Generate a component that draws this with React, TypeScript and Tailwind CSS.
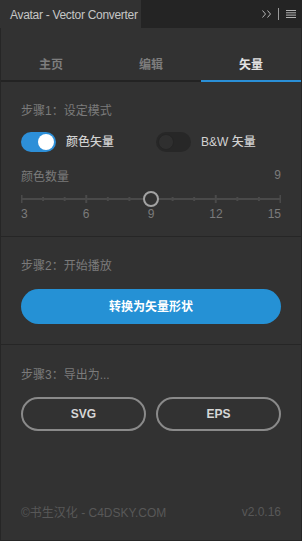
const ticks = Array.from({ length: 13 }, (_, i) => i);
const labels = [3, 6, 9, 12, 15];

function Toggle({ on }: { on: boolean }) {
  return (
    <div
      className={
        on
          ? 'w-[35px] h-[20px] rounded-full bg-[#2d8fd8] flex items-center justify-end px-[2px]'
          : 'w-[35px] h-[20px] rounded-full bg-[#272727] flex items-center justify-start px-[2px]'
      }
    >
      <div
        className={
          on
            ? 'w-[16px] h-[16px] rounded-full bg-white'
            : 'w-[16px] h-[16px] rounded-full bg-[#2f2f2f] border border-[#252525]'
        }
      />
    </div>
  );
}

function Slider() {
  // value 9 on a 3..15 scale
  const pct = ((9 - 3) / 12) * 100;
  return (
    <div className="mt-[6px]">
      <div className="relative h-[16px]">
        <svg width="260" height="16" className="block">
          <line x1="0.5" y1="8" x2="259.5" y2="8" stroke="#4a4a4a" strokeWidth="2" />
          {ticks.map((i) => {
            const x = 0.5 + (259 * i) / 12;
            const major = i % 3 === 0;
            return (
              <line
                key={i}
                x1={x}
                x2={x}
                y1={major ? 4 : 6}
                y2={major ? 12 : 10}
                stroke="#4a4a4a"
                strokeWidth="2"
              />
            );
          })}
        </svg>
        <div
          className="absolute top-0 w-[16px] h-[16px] -translate-x-1/2 rounded-full border-2 border-[#a3a3a3] bg-[#323232]"
          style={{ left: `${pct}%` }}
        />
      </div>
      <div className="relative h-[14px] text-[12px] leading-[14px] text-[#7b7b7b]">
        {labels.map((n, i) => (
          <span
            key={n}
            className={
              i === 0
                ? 'absolute left-0 top-0'
                : i === labels.length - 1
                  ? 'absolute right-0 top-0'
                  : 'absolute top-0 -translate-x-1/2'
            }
            style={i > 0 && i < labels.length - 1 ? { left: `${(i / 4) * 100}%` } : undefined}
          >
            {n}
          </span>
        ))}
      </div>
    </div>
  );
}

export default function App() {
  return (
    <div className="w-[302px] h-[541px] bg-[#242424] flex flex-col overflow-hidden font-['Liberation_Sans','Noto_Sans_CJK_SC',sans-serif]">
      {/* Header */}
      <div className="h-[28px] shrink-0 flex">
        <div className="w-[141px] bg-[#323232] flex items-center pl-[10px] pt-[1px] text-[12px] text-[#c6c6c6] whitespace-nowrap font-['Liberation_Sans',sans-serif] tracking-[-0.3px]">
          Avatar - Vector Converter
        </div>
        <div className="flex-1 flex items-center justify-end pr-[6px]">
          <svg width="10" height="8" viewBox="0 0 10 8" className="mr-[6px]">
            <path d="M0.5 0.5 L3.5 4 L0.5 7.5 M5.5 0.5 L8.5 4 L5.5 7.5" fill="none" stroke="#b4b4b4" strokeWidth="1" />
          </svg>
          <div className="w-px h-[12px] bg-[#9a9a9a] mr-[7px]" />
          <svg width="10" height="8" viewBox="0 0 10 8">
            <rect x="0" y="0" width="10" height="1" fill="#b4b4b4" />
            <rect x="0" y="2.3" width="10" height="1" fill="#b4b4b4" />
            <rect x="0" y="4.6" width="10" height="1" fill="#b4b4b4" />
            <rect x="0" y="7" width="10" height="1" fill="#b4b4b4" />
          </svg>
        </div>
      </div>

      {/* Panel */}
      <div className="flex-1 bg-[#323232] border-x border-b border-[#262626] flex flex-col">
        {/* Tabs */}
        <div className="grid grid-cols-3 pt-[29px]">
          <div className="flex flex-col items-center">
            <span className="h-[16px] leading-[16px] text-[12px] font-bold text-[#7d7d7d]">主页</span>
            <div className="mt-[7px] h-[2px] w-full bg-[#232323]" />
          </div>
          <div className="flex flex-col items-center">
            <span className="h-[16px] leading-[16px] text-[12px] font-bold text-[#7d7d7d]">编辑</span>
            <div className="mt-[7px] h-[2px] w-full bg-[#232323]" />
          </div>
          <div className="flex flex-col items-center">
            <span className="h-[16px] leading-[16px] text-[12px] font-bold text-[#e2e2e2]">矢量</span>
            <div className="mt-[7px] h-[2px] w-full bg-[#2a8fd6]" />
          </div>
        </div>

        {/* Step 1 */}
        <div className="px-[20px] pt-[21px] pb-[15px] border-b border-[#262626]">
          <div className="text-[12px] leading-[16px] text-[#7b7b7b]">步骤1：设定模式</div>
          <div className="mt-[13px] grid grid-cols-2 gap-[10px]">
            <div className="flex items-center gap-[10px]">
              <Toggle on />
              <span className="text-[12px] font-medium text-[#d2d2d2]">颜色矢量</span>
            </div>
            <div className="flex items-center gap-[10px]">
              <Toggle on={false} />
              <span className="text-[12px] font-medium text-[#d2d2d2]">B&amp;W 矢量</span>
            </div>
          </div>
          <div className="mt-[17px] flex justify-between text-[12px] leading-[16px] text-[#7b7b7b]">
            <span>颜色数量</span>
            <span className="-translate-y-[2px]">9</span>
          </div>
          <Slider />
        </div>

        {/* Step 2 */}
        <div className="px-[20px] pt-[21px] pb-[20px] border-b border-[#262626]">
          <div className="text-[12px] leading-[16px] text-[#7b7b7b]">步骤2：开始播放</div>
          <button className="mt-[15px] w-full h-[35px] rounded-full bg-[#2591d5] text-white text-[12px] font-bold">
            转换为矢量形状
          </button>
        </div>

        {/* Step 3 */}
        <div className="px-[20px] pt-[22px]">
          <div className="text-[12px] leading-[16px] text-[#7b7b7b]">步骤3：导出为...</div>
          <div className="mt-[14px] grid grid-cols-2 gap-[10px]">
            <button className="h-[34px] rounded-full border-2 border-[#8a8a8a] text-[12px] font-bold text-[#d6d6d6]">
              SVG
            </button>
            <button className="h-[34px] rounded-full border-2 border-[#8a8a8a] text-[12px] font-bold text-[#d6d6d6]">
              EPS
            </button>
          </div>
        </div>

        {/* Footer */}
        <div className="mt-auto px-[20px] pb-[19px] flex justify-between items-end text-[12px] leading-[16px] text-[#585858]">
          <span>©书生汉化 - C4DSKY.COM</span>
          <span className="-translate-y-[1px]">v2.0.16</span>
        </div>
      </div>
    </div>
  );
}
